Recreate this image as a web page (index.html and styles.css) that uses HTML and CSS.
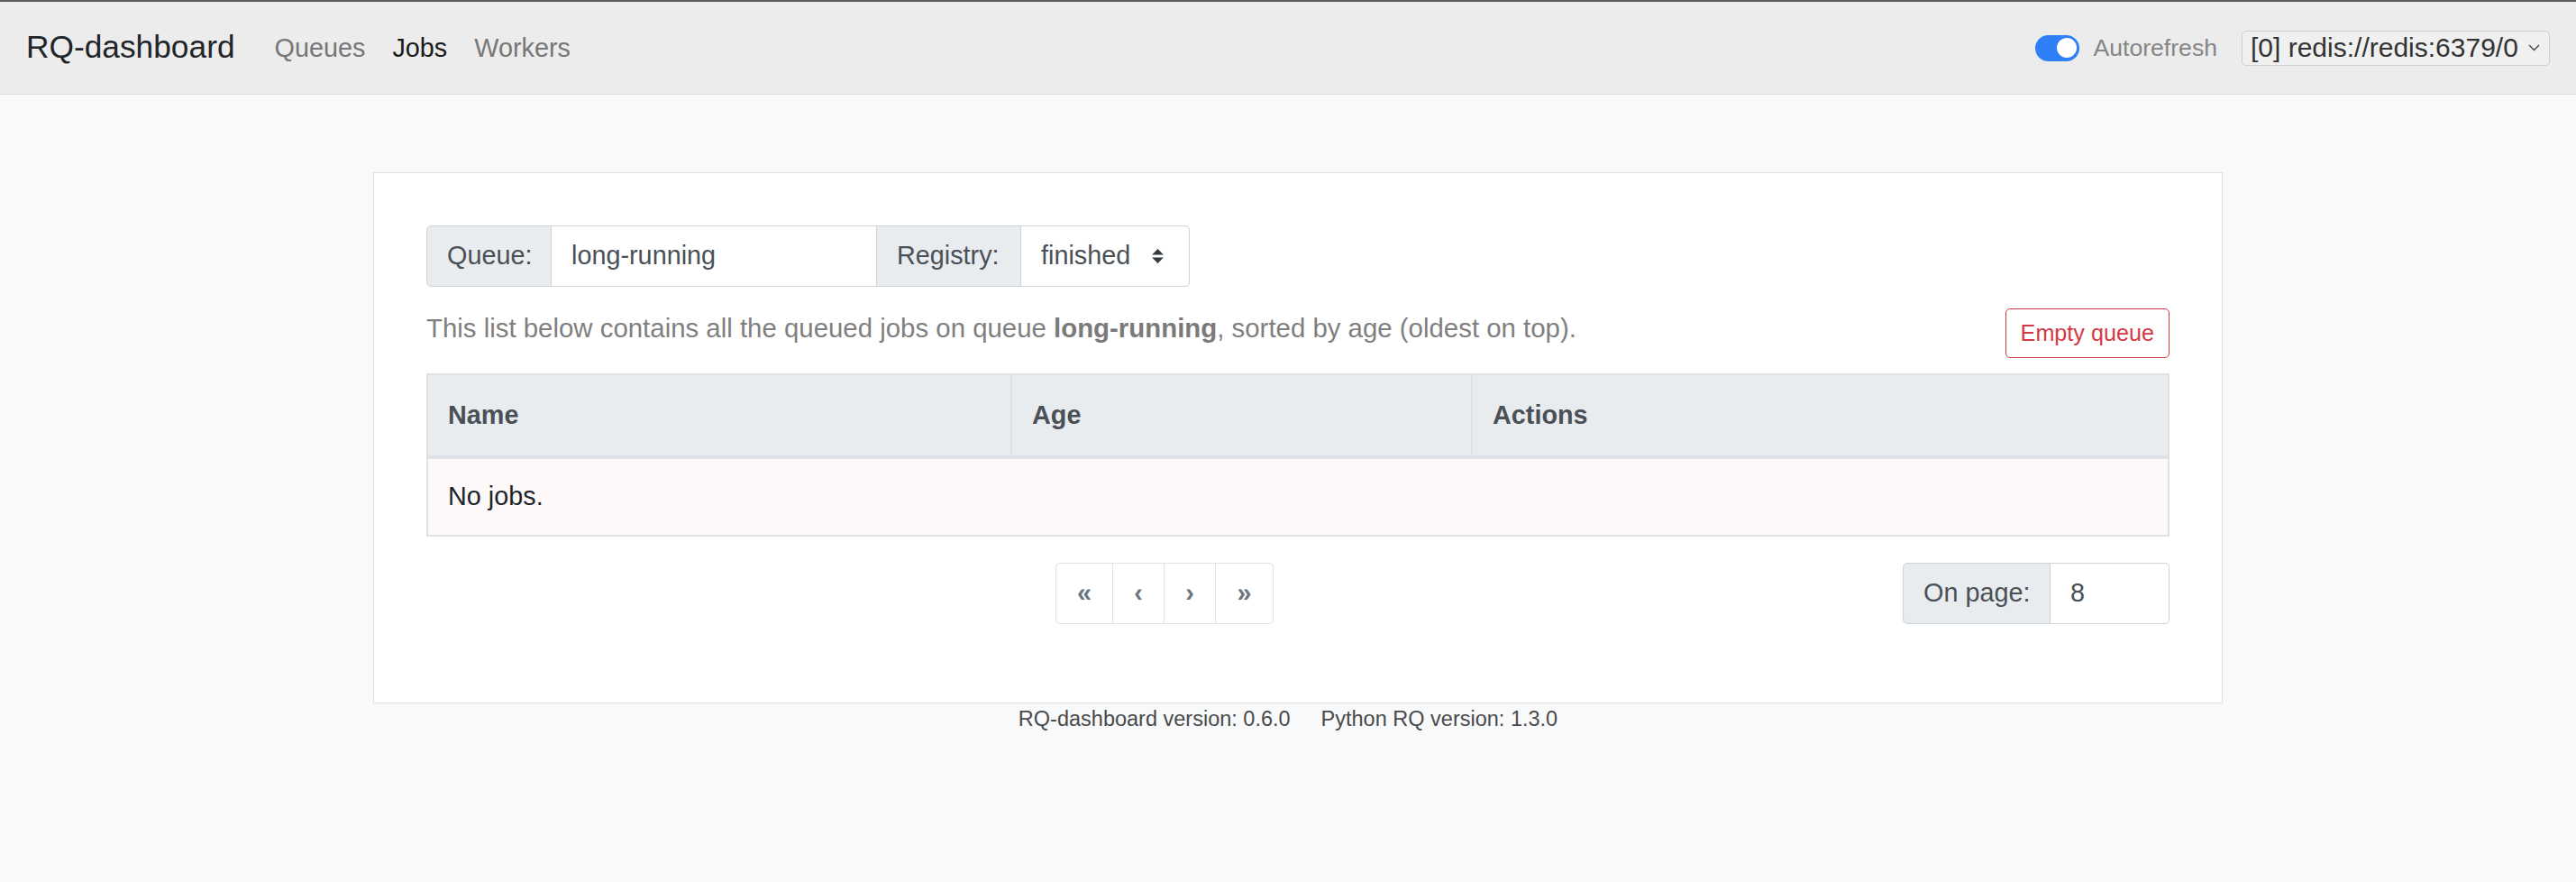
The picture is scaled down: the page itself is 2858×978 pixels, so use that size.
FILE: index.html
```html
<!DOCTYPE html>
<html lang="en">
<head>
<meta charset="utf-8">
<title>RQ-dashboard</title>
<link rel="stylesheet" href="styles.css">
</head>
<body>
<nav class="navbar">
  <a class="brand" href="#">RQ-dashboard</a>
  <ul class="nav">
    <li><a class="nav-link" href="#">Queues</a></li>
    <li><a class="nav-link active" href="#">Jobs</a></li>
    <li><a class="nav-link" href="#">Workers</a></li>
  </ul>
  <div class="nav-right">
    <label class="switch">
      <span class="switch-track"><span class="switch-knob"></span></span>
      <span class="switch-label">Autorefresh</span>
    </label>
    <div class="native-select">
      <span class="native-text">[0] redis://redis:6379/0</span>
      <svg class="chev" width="13" height="8" viewBox="0 0 13 8"><polyline points="1,1 6.5,6.5 12,1" fill="none" stroke="#444" stroke-width="1.4"/></svg>
    </div>
  </div>
</nav>

<main class="container">
  <section class="card">
    <div class="input-group">
      <span class="addon addon-queue">Queue:</span>
      <span class="field field-queue">long-running</span>
      <span class="addon addon-registry">Registry:</span>
      <span class="field field-select">finished
        <svg class="updown" width="13" height="16" viewBox="0 0 4 5"><path fill="#343a40" d="M2 0L0 2h4zm0 5L0 3h4z"/></svg>
      </span>
    </div>

    <div class="info-row">
      <p class="info">This list below contains all the queued jobs on queue <strong>long-running</strong>, sorted by age (oldest on top).</p>
      <button class="btn-danger-outline">Empty queue</button>
    </div>

    <table class="jobs">
      <colgroup>
        <col class="c-name"><col class="c-age"><col class="c-actions">
      </colgroup>
      <thead>
        <tr><th>Name</th><th>Age</th><th>Actions</th></tr>
      </thead>
      <tbody>
        <tr class="empty"><td colspan="3">No jobs.</td></tr>
      </tbody>
    </table>

    <div class="pager-row">
      <div class="pager-area">
        <ul class="pagination">
          <li class="page wide">&laquo;</li>
          <li class="page">&lsaquo;</li>
          <li class="page">&rsaquo;</li>
          <li class="page wide">&raquo;</li>
        </ul>
      </div>
      <div class="input-group per-page">
        <span class="addon addon-onpage">On page:</span>
        <span class="field field-num">8</span>
      </div>
    </div>
  </section>
</main>

<footer class="footer">
  <span>RQ-dashboard version: 0.6.0</span>
  <span>Python RQ version: 1.3.0</span>
</footer>
</body>
</html>
```

FILE: styles.css
```css
* { box-sizing: border-box; }

html, body {
  margin: 0;
  padding: 0;
}

body {
  background: #f8f9fa;
  font-family: "Liberation Sans", Arial, sans-serif;
  font-size: 28.8px;
  color: #212529;
  line-height: 1.5;
}

a { text-decoration: none; }

/* ---------- navbar ---------- */
.navbar {
  height: 105px;
  background: #ececec;
  border-top: 2px solid #5a5a5e;
  border-bottom: 1px solid #dcdcdc;
  display: flex;
  align-items: center;
  padding: 0 29px;
}

.brand {
  font-size: 35.3px;
  color: #212529;
  margin-right: 29px;
  line-height: 1;
  padding-bottom: 2px;
}

.nav {
  list-style: none;
  margin: 0;
  padding: 0;
  display: flex;
}

.nav-link {
  display: block;
  padding: 0 15px;
  font-size: 28.8px;
  color: #777;
  line-height: 1;
}

.nav-link.active { color: #1a1a1a; }

.nav-right {
  margin-left: auto;
  display: flex;
  align-items: center;
}

.switch {
  display: flex;
  align-items: center;
  margin-right: 27px;
}

.switch-track {
  width: 49px;
  height: 29px;
  border-radius: 15px;
  background: #2f80f6;
  display: flex;
  align-items: center;
  justify-content: flex-end;
  padding: 0 3px;
  margin-right: 16px;
}

.switch-knob {
  width: 22px;
  height: 22px;
  border-radius: 50%;
  background: #fff;
}

.switch-label {
  font-size: 26.6px;
  color: #868686;
  line-height: 1;
}

.native-select {
  width: 342px;
  height: 39px;
  background: #f0f0f0;
  border: 1px solid #cfcfcf;
  border-radius: 5px;
  display: flex;
  align-items: center;
  padding: 0 10px 0 9px;
  font-size: 30px;
  color: #333;
  line-height: 1;
  white-space: nowrap;
}

.native-text { flex: none; }
.native-select .chev { margin-left: auto; flex: none; }

/* ---------- main card ---------- */
.container {
  width: 2052px;
  margin: 86px 0 0 414px;
}

.card {
  background: #fff;
  border: 1px solid #dfdfdf;
  padding: 58px 58px 58px 58px;
}

.input-group {
  display: flex;
  height: 68px;
}

.addon, .field {
  display: flex;
  align-items: center;
  height: 68px;
  border: 1px solid #ced4da;
  font-size: 28.8px;
  color: #495057;
  padding: 0 22px;
  white-space: nowrap;
}

.addon { background: #e9ecef; }
.field { background: #fff; }

.input-group > * + * { border-left: none; }
.input-group > :first-child { border-radius: 5px 0 0 5px; }
.input-group > :last-child { border-radius: 0 5px 5px 0; }

.addon-queue { width: 139px; }
.field-queue { width: 361px; }
.addon-registry { width: 160px; }
.field-select { width: 187px; justify-content: space-between; padding-right: 28px; }

.info-row {
  display: flex;
  justify-content: space-between;
  align-items: flex-start;
  margin-top: 24px;
}

.info {
  margin: 0;
  color: #7f7f7f;
  font-size: 29.4px;
  line-height: 44px;
}

.info strong { font-weight: bold; color: #7a7a7a; }

.btn-danger-outline {
  font-family: inherit;
  font-size: 25.2px;
  line-height: 1.5;
  color: #d23a46;
  background: #fff;
  border: 1px solid #d23a46;
  border-radius: 5px;
  height: 55px;
  padding: 0 16px;
}

.jobs {
  width: 100%;
  margin-top: 17px;
  border-collapse: collapse;
  table-layout: fixed;
}

.c-name { width: 648px; }
.c-age { width: 511px; }

.jobs th, .jobs td {
  border: 2px solid #dee2e6;
  padding: 0 22px;
  text-align: left;
}

.jobs th {
  height: 92px;
  background: #e9ecef;
  color: #495057;
  font-weight: bold;
  border-bottom-width: 4px;
}

.jobs td {
  height: 87px;
  background: #fdf9f8;
  color: #212529;
}

.pager-row {
  display: flex;
  align-items: center;
  margin: 29px 0 29px;
}

.pager-area {
  width: 1638px;
  display: flex;
  justify-content: center;
}

.pagination {
  list-style: none;
  margin: 0;
  padding: 0;
  display: flex;
}

.page {
  width: 57px;
  height: 68px;
  display: flex;
  align-items: center;
  justify-content: center;
  border: 1px solid #dee2e6;
  border-left: none;
  color: #6c757d;
  font-weight: bold;
  font-size: 28.8px;
  background: #fff;
}

.page.wide { width: 64px; }
.page:first-child { border-left: 1px solid #dee2e6; border-radius: 5px 0 0 5px; }
.page:last-child { border-radius: 0 5px 5px 0; }

.per-page { margin-left: auto; }
.addon-onpage { width: 164px; }
.field-num { width: 132px; }

/* ---------- footer ---------- */
.footer {
  display: flex;
  justify-content: center;
  gap: 34px;
  font-size: 23.5px;
  color: #4a4a4a;
  line-height: 35px;
  padding-top: 0;
}
```
